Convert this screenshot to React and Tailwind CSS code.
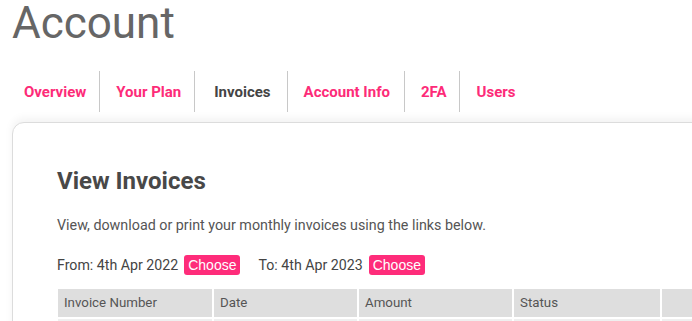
import React from 'react';

const tabs = [
  { label: 'Overview', pad: 'pl-[16px] pr-[13px]' },
  { label: 'Your Plan', pad: 'pl-[16px] pr-[13px]' },
  { label: 'Invoices', pad: 'pl-[19px] pr-[16px]', active: true },
  { label: 'Account Info', pad: 'pl-[16px] pr-[14px]' },
  { label: '2FA', pad: 'pl-[16px] pr-[12px]' },
  { label: 'Users', pad: 'pl-[17px] pr-[12px]' },
];

const columns = [
  { label: 'Invoice Number', w: 'w-[154px]' },
  { label: 'Date', w: 'w-[143px]' },
  { label: 'Amount', w: 'w-[153px]' },
  { label: 'Status', w: 'w-[146px]' },
  { label: '', w: 'w-[60px]' },
];

const ChooseButton = () => (
  <span className="inline-flex items-center h-[20px] px-[4px] rounded-[3px] bg-[#fe2c7a] text-white text-[14px] leading-none font-['Liberation_Sans',Arial,sans-serif]">
    Choose
  </span>
);

export default function App() {
  return (
    <div className="w-[692px] h-[321px] overflow-hidden bg-white font-['Roboto',sans-serif]">
      <h1 className="pl-[12px] text-[44px] leading-[46px] text-[#666] font-normal">Account</h1>

      {/* tabs */}
      <nav className="flex mt-[25px] pl-[8px] h-[41px]">
        {tabs.map((t, i) => (
          <div
            key={t.label}
            className={
              'flex items-center pt-[2px] text-[15px] font-bold ' + t.pad + ' ' +
              (i < tabs.length - 1 ? 'border-r border-[#c8c8c8] ' : '') +
              (t.active ? 'text-[#444]' : 'text-[#fd2b78]')
            }
          >
            {t.label}
          </div>
        ))}
      </nav>

      {/* card */}
      <div className="ml-[12px] mt-[10px] w-[720px] rounded-[12px] border border-[#dcdcdc] bg-white shadow-[0_-4px_8px_rgba(0,0,0,0.05)] pl-[44px] pt-[42px]">
        <h2 className="text-[24px] leading-[32px] font-bold text-[#484848]">View Invoices</h2>
        <p className="mt-[18px] text-[14.3px] leading-[20px] text-[#555]">
          View, download or print your monthly invoices using the links below.
        </p>
        <div className="mt-[20px] flex items-center text-[14.2px] text-[#444]">
          <span>From: 4th Apr 2022</span>
          <span className="ml-[6px]"><ChooseButton /></span>
          <span className="ml-[18px]">To: 4th Apr 2023</span>
          <span className="ml-[6px]"><ChooseButton /></span>
        </div>
        <div className="mt-[13px] ml-[1px]">
          <div className="flex gap-[2px]">
            {columns.map((c, i) => (
              <div key={i} className={c.w + ' h-[28px] bg-[#dedede] flex items-center pl-[6px] text-[13.3px] text-[#555]'}>
                {c.label}
              </div>
            ))}
          </div>
          <div className="flex gap-[2px] mt-[2px]">
            {columns.map((c, i) => (
              <div key={i} className={c.w + ' h-[28px] bg-[#efefef]'} />
            ))}
          </div>
        </div>
      </div>
    </div>
  );
}
